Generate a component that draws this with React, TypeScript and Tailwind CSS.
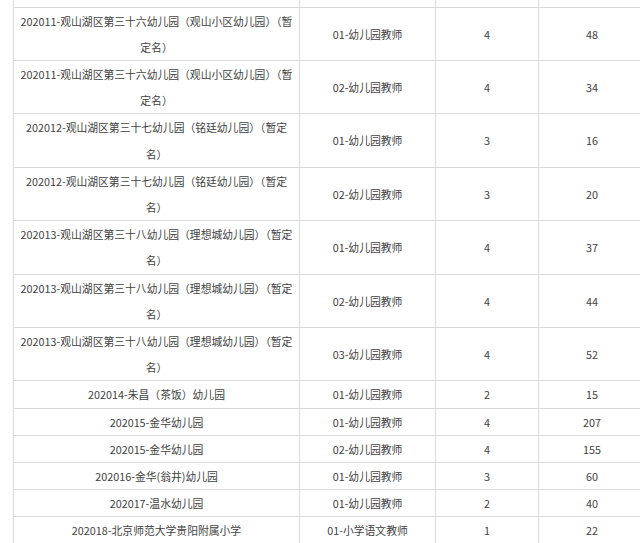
const ROWS: [string[], string, string, string][] = [
  [["202011-观山湖区第三十六幼儿园（观山小区幼儿园）（暂", "定名）"], "01-幼儿园教师", "4", "48"],
  [["202011-观山湖区第三十六幼儿园（观山小区幼儿园）（暂", "定名）"], "02-幼儿园教师", "4", "34"],
  [["202012-观山湖区第三十七幼儿园（铭廷幼儿园）（暂定", "名）"], "01-幼儿园教师", "3", "16"],
  [["202012-观山湖区第三十七幼儿园（铭廷幼儿园）（暂定", "名）"], "02-幼儿园教师", "3", "20"],
  [["202013-观山湖区第三十八幼儿园（理想城幼儿园）（暂定", "名）"], "01-幼儿园教师", "4", "37"],
  [["202013-观山湖区第三十八幼儿园（理想城幼儿园）（暂定", "名）"], "02-幼儿园教师", "4", "44"],
  [["202013-观山湖区第三十八幼儿园（理想城幼儿园）（暂定", "名）"], "03-幼儿园教师", "4", "52"],
  [["202014-朱昌（茶饭）幼儿园"], "01-幼儿园教师", "2", "15"],
  [["202015-金华幼儿园"], "01-幼儿园教师", "4", "207"],
  [["202015-金华幼儿园"], "02-幼儿园教师", "4", "155"],
  [["202016-金华(翁井)幼儿园"], "01-幼儿园教师", "3", "60"],
  [["202017-温水幼儿园"], "01-幼儿园教师", "2", "40"],
  [["202018-北京师范大学贵阳附属小学"], "01-小学语文教师", "1", "22"],
];

const cell = "border border-[#dadada] px-[2px] py-0 text-center align-middle whitespace-nowrap";

export default function App() {
  return (
    <div className="h-[543px] w-[640px] overflow-hidden bg-white pl-[13px]">
      <table
        className="w-[632px] table-fixed border-collapse text-[10.8px] leading-[26.2px] text-[#424242]"
        style={{ fontFamily: '"Noto Sans CJK SC", "Noto Sans", sans-serif' }}
      >
        <colgroup>
          <col className="w-[286px]" />
          <col className="w-[136px]" />
          <col className="w-[103px]" />
          <col className="w-[107px]" />
        </colgroup>
        <tbody>
          {/* tail of the previous row, cut off by the top edge */}
          <tr className="h-[7px]">
            <td className="border-x border-b border-[#dadada] p-0" />
            <td className="border-x border-b border-[#dadada] p-0" />
            <td className="border-x border-b border-[#dadada] p-0" />
            <td className="border-x border-b border-[#dadada] p-0" />
          </tr>
          {ROWS.map(([school, post, count, applicants], i) => (
            <tr key={i}>
              <td className={cell}>
                {school.map((line) => (
                  <div key={line}>{line}</div>
                ))}
              </td>
              <td className={cell}>{post}</td>
              <td className={cell}>{count}</td>
              <td className={cell}>{applicants}</td>
            </tr>
          ))}
        </tbody>
      </table>
    </div>
  );
}
